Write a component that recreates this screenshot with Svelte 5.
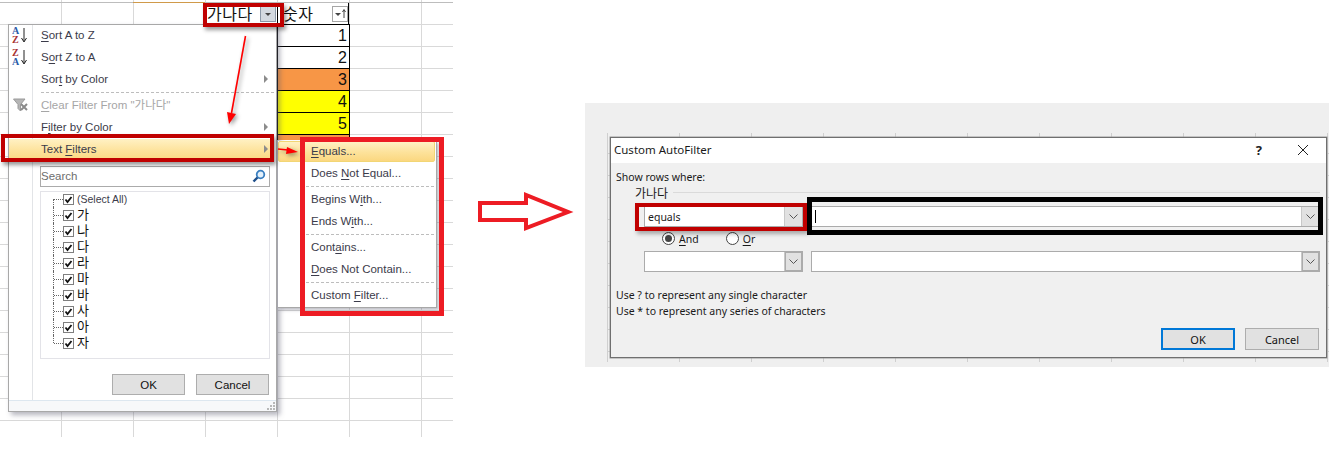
<script lang="ts">
  const nums = [1, 2, 3, 4, 5];
  const tree = ['(Select All)', '가', '나', '다', '라', '마', '바', '사', '아', '자'];
  // key = underlined letter
  const subMenu = [
    { pre: '', key: 'E', post: 'quals...', hot: true },
    { pre: 'Does ', key: 'N', post: 'ot Equal...' },
    { sep: true },
    { pre: 'Begins W', key: 'i', post: 'th...' },
    { pre: 'Ends W', key: 'i', post: 'th...' },
    { sep: true },
    { pre: 'Cont', key: 'a', post: 'ins...' },
    { pre: '', key: 'D', post: 'oes Not Contain...' },
    { sep: true },
    { pre: 'Custom ', key: 'F', post: 'ilter...' }
  ];
</script>

{#snippet check()}
  <svg class="check" width="11" height="11" viewBox="0 0 11 11">
    <rect x="0.5" y="0.5" width="10" height="10" fill="#fff" stroke="#7f7f7f" />
    <path d="M2.5 5.5 L4.5 8 L8.5 3" fill="none" stroke="#111" stroke-width="1.8" />
  </svg>
{/snippet}

{#snippet chevron()}
  <svg class="chev" width="9" height="5" viewBox="0 0 9 5"><path d="M0.5 0.5 L4.5 4.5 L8.5 0.5" fill="none" stroke="#555" /></svg>
{/snippet}

<div class="page">
  <!-- excel sheet -->
  <div class="sheet">
    <div class="topline"></div>
    <div class="head">
      <div class="hcell">
        <span class="ko">가나다</span>
        <span class="fbtn grey"><i class="tri"></i></span>
      </div>
      <div class="hcell second">
        <span class="ko">숫자</span>
        <span class="fbtn">
          <i class="tri"></i>
          <svg width="4" height="9" viewBox="0 0 4 9"><path d="M2 9 V1 M0.5 3 L2 0.5 L3.5 3" fill="none" stroke="#444" /></svg>
        </span>
      </div>
    </div>
    <div class="col">
      {#each nums as n}
        <div class="num" class:orange={n === 3} class:yellow={n > 3}>{n}</div>
      {/each}
      <div class="num orange stub"></div>
    </div>
  </div>

  <!-- filter dropdown -->
  <div class="menu">
    <div class="gutter"></div>
    <div class="item">
      <svg class="ico" width="20" height="18" viewBox="0 0 20 18">
        <text x="0" y="8" class="az blue">A</text>
        <text x="0" y="17" class="az red">Z</text>
        <path d="M12 2 V15 M9.5 12 L12 16 L14.5 12" fill="none" stroke="#222" />
      </svg>
      <span><u>S</u>ort A to Z</span>
    </div>
    <div class="item">
      <svg class="ico" width="20" height="18" viewBox="0 0 20 18">
        <text x="0" y="8" class="az red">Z</text>
        <text x="0" y="17" class="az blue">A</text>
        <path d="M12 2 V15 M9.5 12 L12 16 L14.5 12" fill="none" stroke="#222" />
      </svg>
      <span>S<u>o</u>rt Z to A</span>
    </div>
    <div class="item">
      <span>Sor<u>t</u> by Color</span><i class="more"></i>
    </div>
    <div class="dash"></div>
    <div class="item off">
      <svg class="ico clear" width="16" height="14" viewBox="0 0 16 14">
        <path d="M0.5 1 H12 L7.5 6.5 V13 L5 10.5 V6.5 Z" fill="#b5b5b5" stroke="#9a9a9a" />
        <path d="M8 6 L14 12 M14 6 L8 12" stroke="#8a8a8a" stroke-width="2" />
      </svg>
      <span class="tight"><u>C</u>lear Filter From "<span class="ko">가나다</span>"</span>
    </div>
    <div class="item"><span>F<u>i</u>lter by Color</span><i class="more"></i></div>
    <div class="item hot"><span>Text <u>F</u>ilters</span><i class="more"></i></div>

    <div class="search">
      <span>Search</span>
      <svg width="14" height="14" viewBox="0 0 14 14">
        <circle cx="8.5" cy="5.5" r="3.8" fill="#e4f1fb" stroke="#3a7fc0" stroke-width="1.8" />
        <path d="M5.5 8.5 L1.5 12.5" stroke="#1f4f8a" stroke-width="2.4" />
      </svg>
    </div>

    <div class="tree">
      {#each tree as t, i}
        <div class="node" class:first={i === 0} class:last={i === tree.length - 1}>
          {@render check()}
          <span class:ko={i > 0} class:all={i === 0}>{t}</span>
        </div>
      {/each}
    </div>

    <div class="menu-btns">
      <button class="xbtn">OK</button>
      <button class="xbtn">Cancel</button>
    </div>
    <div class="strip">
      <svg width="8" height="8" viewBox="0 0 8 8"><path d="M6 0h2v2H6z M3 3h2v2H3z M6 3h2v2H6z M0 6h2v2H0z M3 6h2v2H3z M6 6h2v2H6z" fill="#b8b8b8" /></svg>
    </div>
  </div>

  <!-- text filters submenu -->
  <div class="submenu">
    {#each subMenu as s}
      {#if s.sep}
        <div class="dash sub"></div>
      {:else}
        <div class="subitem" class:hot={s.hot}>{s.pre}<u>{s.key}</u>{s.post}</div>
      {/if}
    {/each}
  </div>

  <!-- custom autofilter dialog -->
  <div class="panel">
    <div class="behind"></div>
    <div class="dialog">
      <div class="titlebar">
        <span>Custom AutoFilter</span>
        <span class="help">?</span>
        <svg width="12" height="12" viewBox="0 0 12 12"><path d="M1 1 L11 11 M11 1 L1 11" stroke="#222" fill="none" /></svg>
      </div>
      <div class="body">
        <div class="show">Show rows where:</div>
        <div class="legend"><span class="ko">가나다</span><i></i></div>
        <div class="fields">
          <div class="combo"><span>equals</span><b>{@render chevron()}</b></div>
          <div class="combo wide"><i class="caret"></i><b>{@render chevron()}</b></div>
        </div>
        <div class="radios">
          <span class="radio on"></span><span class="lbl"><u>A</u>nd</span>
          <span class="radio"></span><span class="lbl"><u>O</u>r</span>
        </div>
        <div class="fields low">
          <div class="combo"><b>{@render chevron()}</b></div>
          <div class="combo wide"><b>{@render chevron()}</b></div>
        </div>
        <div class="notes">
          <div>Use ? to represent any single character</div>
          <div>Use * to represent any series of characters</div>
        </div>
        <div class="dlg-btns">
          <button class="dbtn def">OK</button>
          <button class="dbtn">Cancel</button>
        </div>
      </div>
    </div>
  </div>

  <!-- annotations -->
  <div class="frame f-head"></div>
  <div class="frame f-text"></div>
  <div class="frame f-sub"></div>
  <div class="frame f-equals"></div>
  <div class="frame f-black"></div>

  <svg class="marks" width="1329" height="475" viewBox="0 0 1329 475">
    <g class="shadowed">
      <path d="M245.5 36 L231.5 113" stroke="#f00" stroke-width="1.6" fill="none" />
      <path d="M229 124 L227 112 L236 114 Z" fill="#f00" />
      <path d="M278 149 L288 150" stroke="#f00" stroke-width="1.6" fill="none" />
      <path d="M298 152 L287 147 L286 154 Z" fill="#f00" />
    </g>
    <path d="M480 203 H526 V195 L568 212 L526 228 V220 H480 Z" fill="#fff" stroke="#ed1c24" stroke-width="4" />
  </svg>
</div>

<style>
  :global(body) { margin: 0; background: #fff; }
  .page {
    position: relative;
    width: 1329px;
    height: 475px;
    overflow: hidden;
    background: #fff;
    font-family: "Liberation Sans", "Noto Sans CJK KR", sans-serif;
    font-size: 11.5px;
    color: #222;
  }
  .ko { font-family: "Noto Sans CJK KR", sans-serif; }
  u { text-underline-offset: 2px; }

  /* sheet */
  .sheet {
    position: absolute;
    left: 0;
    top: 0;
    width: 453px;
    height: 437px;
    background-image:
      linear-gradient(to right, #d9d9d9 1px, transparent 1px),
      linear-gradient(to bottom, #d9d9d9 1px, transparent 1px);
    background-repeat: repeat-x, repeat-y;
    background-size: 72px 100%, 100% 22px;
    background-position: 61px 0, 0 2px;
  }
  .topline {
    height: 1px;
    margin-top: 2px;
    background: linear-gradient(to right, #bdbdbd 133px, #d09a4a 133px, #d09a4a 205px, #bdbdbd 205px);
  }
  .head { display: flex; margin-left: 205px; height: 21px; }
  .hcell {
    width: 72px;
    display: flex;
    align-items: center;
    justify-content: space-between;
    box-sizing: border-box;
    padding: 0 1px 0 2px;
    font-size: 16px;
    color: #111;
  }
  .hcell .ko { letter-spacing: .5px; line-height: 21px; white-space: nowrap; }
  .hcell.second { border-left: 1px solid #000; border-right: 1px solid #000; padding: 0 0 0 5px; }
  .fbtn {
    width: 16px;
    height: 16px;
    flex: none;
    box-sizing: border-box;
    border: 1px solid #a6a6a6;
    background: #fff;
    display: flex;
    align-items: center;
    justify-content: center;
    gap: 1px;
  }
  .fbtn.grey { background: #d3d9e0; border-color: #8c99a8; }
  .tri {
    width: 0;
    height: 0;
    margin-top: 2px;
    border-left: 3px solid transparent;
    border-right: 3px solid transparent;
    border-top: 3px solid #444;
  }
  .col { margin-left: 277px; width: 73px; box-sizing: border-box; border: 1px solid #000; border-width: 0 1px; }
  .num {
    height: 22px;
    box-sizing: border-box;
    border-top: 1px solid #000;
    text-align: right;
    padding-right: 2px;
    font-size: 16px;
    line-height: 22px;
    color: #111;
    background: #fff;
  }
  .num.orange { background: #f79646; }
  .num.yellow { background: #ff0; }
  .num.stub { height: 6px; }

  /* dropdown */
  .menu {
    position: absolute;
    left: 8px;
    top: 24px;
    width: 269px;
    height: 388px;
    box-sizing: border-box;
    background: #fff;
    border: 1px solid #a8a8a8;
    box-shadow: 3px 3px 5px rgba(90, 90, 110, .45);
    display: flex;
    flex-direction: column;
  }
  .gutter {
    position: absolute;
    left: 23px;
    top: 0;
    bottom: 11px;
    width: 1px;
    background: #e2e4e7;
  }
  .item {
    position: relative;
    height: 22px;
    flex: none;
    box-sizing: border-box;
    padding-bottom: 2px;
    display: flex;
    align-items: center;
    padding-left: 32px;
    color: #3b3b4a;
  }
  .item.off { color: #a6a6a6; }
  .item.hot {
    margin: 0 4px 0 0;
    background: linear-gradient(#fff1c4, #fde29a 55%, #fbd780);
    color: #3b3b4a;
  }
  .tight { line-height: 14px; }
  .tight .ko { line-height: 1; }
  .ico { position: absolute; left: 3px; top: 1px; }
  .ico.clear { left: 4px; top: 3px; }
  .az { font: bold 10px "Liberation Serif", serif; }
  .blue { fill: #2a5ba8; }
  .red { fill: #a83232; }
  .more {
    position: absolute;
    right: 8px;
    top: 6px;
    width: 0;
    height: 0;
    border-top: 4px solid transparent;
    border-bottom: 4px solid transparent;
    border-left: 4px solid #8c8c8c;
  }
  .item.hot .more { right: 4px; }
  .dash {
    height: 4px;
    flex: none;
    box-sizing: border-box;
    margin-left: 32px;
    padding-top: 1px;
    background: linear-gradient(to right, #bdbdbd 3px, transparent 3px) 0 1px / 5px 1px repeat-x;
  }
  .search {
    flex: none;
    margin: 5px 0 0 31px;
    width: 230px;
    height: 21px;
    box-sizing: border-box;
    border: 1px solid #ababab;
    display: flex;
    align-items: center;
    justify-content: space-between;
    padding: 0 3px 2px 0;
    color: #6d6d6d;
  }
  .search span { margin-left: 0; }
  .tree {
    flex: none;
    margin: 4px 0 0 31px;
    width: 230px;
    height: 168px;
    box-sizing: border-box;
    border: 1px solid #e3e3e8;
  }
  .node {
    position: relative;
    height: 16px;
    display: flex;
    align-items: center;
    gap: 3px;
    padding-left: 22px;
    font-size: 13px;
    color: #111;
  }
  .node.first { margin-top: -1px; }
  .node span { display: block; height: 14px; line-height: 14px; margin-top: -3px; }
  .node::before {
    content: '';
    position: absolute;
    left: 12px;
    top: 0;
    bottom: 0;
    border-left: 1px dotted #666;
  }
  .node.first::before { top: 8px; }
  .node.last::before { bottom: 8px; }
  .node::after {
    content: '';
    position: absolute;
    left: 13px;
    width: 9px;
    top: 8px;
    border-top: 1px dotted #666;
  }
  .node .all { font-size: 10.5px; color: #3b3b4a; margin-top: -1px; }
  .check { flex: none; }
  .menu-btns {
    flex: none;
    margin: 15px 0 0 103px;
    display: flex;
    gap: 11px;
  }
  .xbtn {
    width: 73px;
    height: 21px;
    padding: 0;
    border: 1px solid #adadad;
    background: #e1e1e1;
    font: inherit;
    color: #111;
  }
  .strip {
    position: absolute;
    left: 0;
    right: 0;
    bottom: 0;
    height: 11px;
    box-sizing: border-box;
    border-top: 1px solid #dde7f0;
    background: #f7f8fa;
    display: flex;
    justify-content: flex-end;
    align-items: flex-end;
    padding: 0 1px 1px 0;
  }

  /* submenu */
  .submenu {
    position: absolute;
    left: 278px;
    top: 141px;
    width: 159px;
    height: 167px;
    box-sizing: border-box;
    background: #fff;
    border-right: 1px solid #a8a8a8;
    border-bottom: 1px solid #a8a8a8;
    box-shadow: 2px 2px 3px rgba(90, 90, 110, .4);
    display: flex;
    flex-direction: column;
  }
  .subitem {
    flex: none;
    height: 22px;
    line-height: 21px;
    padding-left: 33px;
    color: #3b3b4a;
  }
  .subitem.hot {
    height: 21px;
    margin: 0 1px 1px 0;
    box-sizing: border-box;
    border: 1px solid #f2d675;
    border-radius: 2px;
    padding-left: 32px;
    line-height: 19px;
    background: linear-gradient(#fff1c4, #fde29a 55%, #fbd780);
  }
  .dash.sub { margin-left: 28px; height: 4px; }

  /* dialog */
  .panel {
    position: absolute;
    left: 585px;
    top: 103px;
    width: 744px;
    height: 264px;
    background: #efefef;
  }
  .behind {
    position: absolute;
    left: 22px;
    top: 30px;
    right: 0;
    bottom: 5px;
    background-image:
      linear-gradient(to right, #cfcfcf 1px, transparent 1px),
      linear-gradient(to bottom, #cfcfcf 1px, transparent 1px);
    background-size: 72px 100%, 100% 22px;
    background-position: 0 0, 0 20px;
  }
  .dialog {
    position: absolute;
    left: 25px;
    top: 34px;
    width: 717px;
    height: 221px;
    box-sizing: border-box;
    border: 1px solid #6f6f6f;
    box-shadow: 0 0 0 .5px #9a9a9a;
    background: #f0f0f0;
    font-family: "Noto Sans", "Noto Sans CJK KR", sans-serif;
    font-size: 10.5px;
    color: #1a1a1a;
  }
  .titlebar {
    height: 25px;
    box-sizing: border-box;
    padding: 0 17px 2px 3px;
    background: #fff;
    display: flex;
    align-items: center;
  }
  .titlebar span:first-child { flex: 1; font-size: 11.5px; }
  .help { margin-right: 35px; font-size: 13px; font-weight: bold; color: #222; }
  .body { padding: 7px 0 0 5px; }
  .show { line-height: 15px; }
  .legend { display: flex; align-items: center; gap: 5px; margin: 0 6px 0 19px; height: 15px; font-size: 12px; }
  .legend i { flex: 1; height: 1px; background: #dadada; }
  .fields { display: flex; gap: 8px; margin: 6px 0 0 28px; }
  .fields.low { margin-top: 2px; }
  .combo {
    position: relative;
    width: 159px;
    height: 21px;
    box-sizing: border-box;
    border: 1px solid #ababab;
    background: #fff;
    display: flex;
    align-items: center;
    padding-left: 3px;
  }
  .combo.wide { width: 509px; }
  .combo b {
    margin-left: auto;
    width: 17px;
    height: 100%;
    display: flex;
    align-items: center;
    justify-content: center;
    background: #e1e1e1;
    border-left: 1px solid #c8c8c8;
  }
  .low .combo b { box-shadow: inset 0 0 0 1px #ababab; }
  .caret { width: 1px; height: 13px; background: #000; }
  .radios { display: flex; align-items: center; margin: 1px 0 0 46px; height: 21px; }
  .radio {
    width: 11px;
    height: 11px;
    border: 1px solid #444;
    border-radius: 50%;
    background: #fff;
    position: relative;
  }
  .radio.on::after {
    content: '';
    position: absolute;
    inset: 2px;
    border-radius: 50%;
    background: #444;
  }
  .lbl { margin: 0 27px 0 4px; }
  .lbl + .radio + .lbl { margin-right: 0; }
  .notes { margin-top: 15px; line-height: 16px; }
  .dlg-btns { display: flex; justify-content: flex-end; gap: 10px; margin: 9px 7px 0 0; }
  .dbtn {
    width: 74px;
    height: 22px;
    padding: 0;
    box-sizing: border-box;
    border: 1px solid #adadad;
    background: #e1e1e1;
    font: inherit;
    font-size: 11px;
    color: #111;
  }
  .dbtn.def { border: 2px solid #0078d7; }

  /* annotation frames */
  .frame { position: absolute; box-sizing: border-box; pointer-events: none; }
  .f-head { left: 203px; top: 3px; width: 81px; height: 24px; border: 4px solid #c00000; box-shadow: 2px 3px 4px rgba(0,0,0,.4); }
  .f-text { left: 1px; top: 134px; width: 273px; height: 28px; border: 4px solid #c00000; box-shadow: 2px 3px 4px rgba(0,0,0,.4); }
  .f-sub { left: 300px; top: 137px; width: 144px; height: 179px; border: 5px solid #ed1c24; }
  .f-equals { left: 635px; top: 203px; width: 172px; height: 28px; border: 4px solid #c00000; box-shadow: 2px 3px 4px rgba(0,0,0,.3); }
  .f-black { left: 807px; top: 197px; width: 516px; height: 38px; border: 5px solid #000; }
  .marks { position: absolute; left: 0; top: 0; pointer-events: none; }
  .shadowed { filter: drop-shadow(2px 2px 2px rgba(0,0,0,.4)); }
</style>
